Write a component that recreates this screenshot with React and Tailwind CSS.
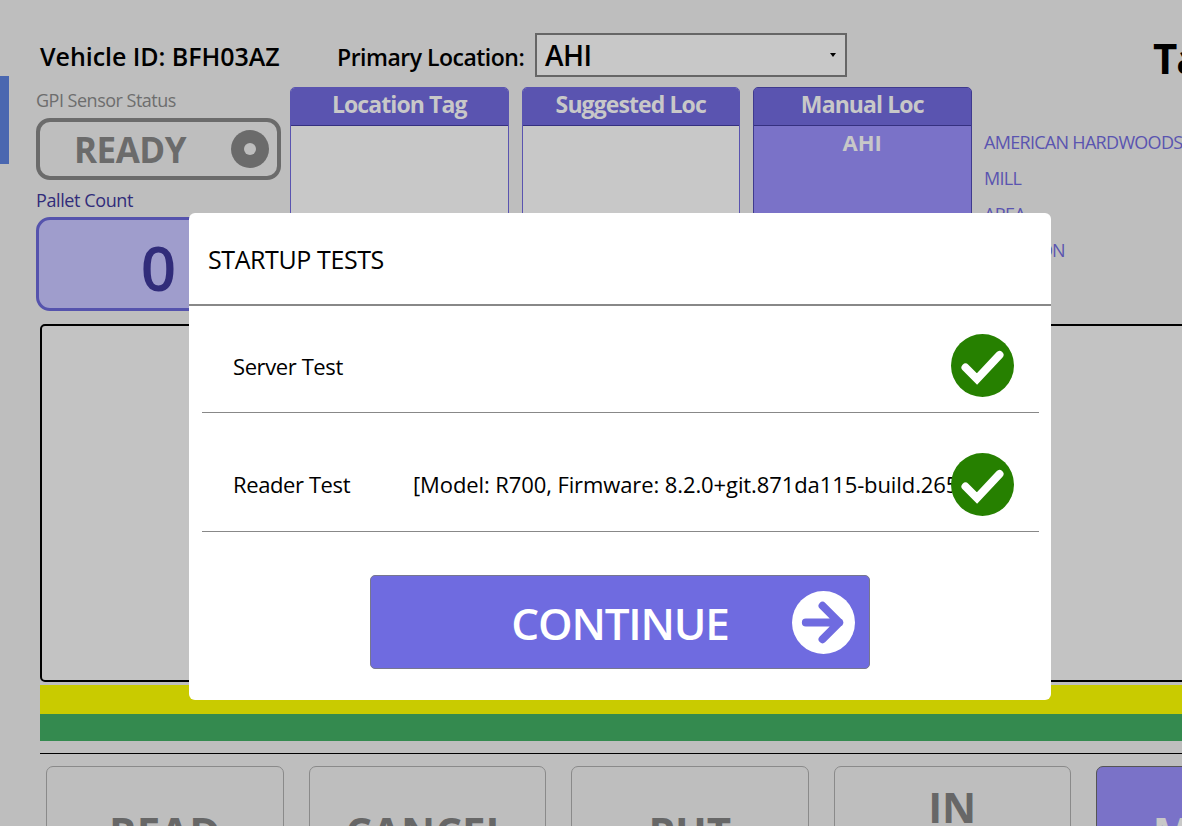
const font = { fontFamily: '"Open Sans", "Noto Sans", sans-serif' };

const LocCard = ({ title, active, children }) => (
  <div
    className={`flex h-[160px] w-[218.5px] shrink-0 flex-col rounded-t-[5px] border ${
      active ? 'border-[#3f3a8e] bg-[#7a72c8]' : 'border-[#5a54b0] bg-[#c8c8c8]'
    }`}
  >
    <div className="flex h-[38px] shrink-0 items-center justify-center rounded-t-[4px] border-b border-[#353080] bg-[#5a54b0] pb-[4px] text-[23px] font-bold tracking-[-0.9px] text-[#c8c8c8]">
      {title}
    </div>
    <div className="pt-[2px] text-center text-[22px] font-bold leading-[28px] text-[#c8c8c8]">{children}</div>
  </div>
);

const ActionButton = ({ label, top, active }) => (
  <div
    className={`flex h-[120px] w-[237.5px] shrink-0 flex-col items-center rounded-[7px] border text-[42px] font-bold leading-[48px] ${
      top ? 'pt-[16px]' : 'pt-[41px]'
    } ${active ? 'border-[#555] bg-[#7a72c8] text-[#c8c8c8]' : 'border-[#8a8a8a] bg-[#bebebe] text-[#676767]'}`}
  >
    {top && <span>{top}</span>}
    <span>{label}</span>
  </div>
);

const CheckIcon = () => (
  <svg width="63" height="63" viewBox="0 0 63 63" className="shrink-0">
    <circle cx="31.5" cy="31.5" r="31.5" fill="#268000" />
    <path d="M14.5 33.5 L26 45 L48.5 21" fill="none" stroke="#fff" strokeWidth="8" strokeLinecap="round" strokeLinejoin="miter" />
  </svg>
);

const StartupModal = () => (
  <div className="absolute left-[189px] top-[213px] flex h-[487px] w-[862px] flex-col rounded-[6px] bg-white text-black">
    <div className="flex h-[93px] shrink-0 items-center border-b-2 border-[#888] pl-[19px] pt-[2px] text-[25px] tracking-[-0.4px]">
      STARTUP TESTS
    </div>
    <div className="ml-[13px] mr-[12px] flex h-[107px] items-center border-b border-[#888] pl-[31px] pr-[25px] pt-[12px]">
      <span className="flex-1 pt-[3px] text-[22px] tracking-[-0.4px]">Server Test</span>
      <CheckIcon />
    </div>
    <div className="relative ml-[13px] mr-[12px] flex h-[119px] items-center border-b border-[#888] pl-[31px] pr-[25px] pt-[22px]">
      <span className="w-[180px] shrink-0 pt-[3px] text-[22px] tracking-[-0.4px]">Reader Test</span>
      <span className="w-[539px] shrink-0 overflow-hidden whitespace-nowrap pt-[3px] text-[22px] tracking-[-0.1px]">
        [Model: R700, Firmware: 8.2.0+git.871da115-build.265
      </span>
      <div className="absolute right-[25px] top-[40px]">
        <CheckIcon />
      </div>
    </div>
    <div className="flex justify-center pt-[43px]">
      <div className="relative flex h-[94px] w-[500px] items-center justify-center rounded-[5px] border border-[#77778f] bg-[#6f6be0] pt-[2px] text-[44px] font-semibold tracking-[-1.2px] text-white">
        CONTINUE
        <svg width="63" height="63" viewBox="0 0 64 64" className="absolute right-[14px] top-[15px]">
          <circle cx="32" cy="32" r="32" fill="#fff" />
          <path d="M14 32 H48 M31 15 L48 32 L31 49" fill="none" stroke="#6f6be0" strokeWidth="8" strokeLinecap="round" strokeLinejoin="round" />
        </svg>
      </div>
    </div>
  </div>
);

const App = () => {
  return (
    <div style={font} className="relative flex h-[826px] w-[1182px] overflow-hidden bg-[#bebebe]">
      <div className="w-[36px] shrink-0 pt-[76px]">
        <div className="h-[88px] w-[9px] bg-[#4a67b0]" />
      </div>

      <div className="flex w-[1400px] shrink-0 flex-col pt-[33px]">
        <div className="flex h-[44px] shrink-0 items-center pl-[4px]">
          <span className="w-[297px] shrink-0 pt-[4px] text-[25px] font-semibold tracking-[-0.05px] text-black">Vehicle ID: BFH03AZ</span>
          <span className="w-[198px] shrink-0 pt-[4px] text-[23px] font-semibold tracking-[-0.5px] text-black">Primary Location:</span>
          <div className="flex h-[44px] w-[312px] shrink-0 items-center justify-between border-2 border-[#666] bg-[#c8c8c8] pl-[8px] pr-[9px] text-[28px] font-semibold tracking-[-0.5px] text-black">
            AHI
            <span className="h-0 w-0 border-x-[3.5px] border-t-[4px] border-x-transparent border-t-black" />
          </div>
          <span className="ml-[306px] pt-[4px] text-[42px] font-bold tracking-[-1px] text-black">Tag</span>
        </div>

        <div className="flex h-[204px] shrink-0 pt-[10px]">
          <div className="flex w-[254px] shrink-0 flex-col">
            <span className="pt-[2px] text-[18px] leading-[22px] tracking-[-0.5px] text-[#6d6d6d]">GPI Sensor Status</span>
            <div className="mt-[7px] flex h-[62px] w-[245px] shrink-0 items-center justify-between rounded-[14px] border-4 border-[#6b6b6b] pl-[34px] pr-[8px] text-[35px] font-bold tracking-[-0.5px] text-[#6b6b6b]">
              <span className="pt-[2px]">READY</span>
              <span className="flex h-[38px] w-[38px] items-center justify-center rounded-full bg-[#6b6b6b]">
                <span className="h-[12px] w-[12px] rounded-full bg-[#bebebe]" />
              </span>
            </div>
            <span className="mt-[8px] shrink-0 text-[18px] leading-[24px] tracking-[-0.4px] text-[#312c7a]">Pallet Count</span>
            <div className="mt-[5px] flex h-[94px] w-[245px] shrink-0 items-center justify-center rounded-[14px] border-[3px] border-[#5553ad] bg-[#9f9dcc] pt-[6px] text-[62px] font-semibold leading-none text-[#312c7a]">
              0
            </div>
          </div>

          <div className="flex gap-[13px]">
            <LocCard title="Location Tag" />
            <LocCard title="Suggested Loc" />
            <LocCard title="Manual Loc" active>AHI</LocCard>
          </div>

          <div className="ml-[12.5px] flex flex-col gap-[11px] pt-[43px] text-[18px] leading-[25px] tracking-[-0.7px] text-[#5a54b0]">
            <span>AMERICAN HARDWOODS</span>
            <span>MILL</span>
            <span>AREA</span>
            <span className="tracking-[-1px]">LOCATION</span>
          </div>
        </div>

        <div className="ml-[4px] flex flex-col">
          <div className="mt-[43px] h-[358px] shrink-0 rounded-[5px] border-[2.5px] border-black bg-[#c3c3c3]" />
          <div className="mt-[3px] h-[29px] shrink-0 bg-[#c9cb00]" />
          <div className="h-[27px] shrink-0 bg-[#348a4f]" />
          <div className="mt-[12px] h-px shrink-0 bg-black" />
          <div className="mt-[12px] flex gap-[25px] pl-[6px]">
            <ActionButton label="READ" />
            <ActionButton label="CANCEL" />
            <ActionButton label="PUT" />
            <ActionButton top="IN" label="TRANSIT" />
            <ActionButton label="MOVE" active />
          </div>
        </div>
      </div>

      <StartupModal />
    </div>
  );
};

export default App;
